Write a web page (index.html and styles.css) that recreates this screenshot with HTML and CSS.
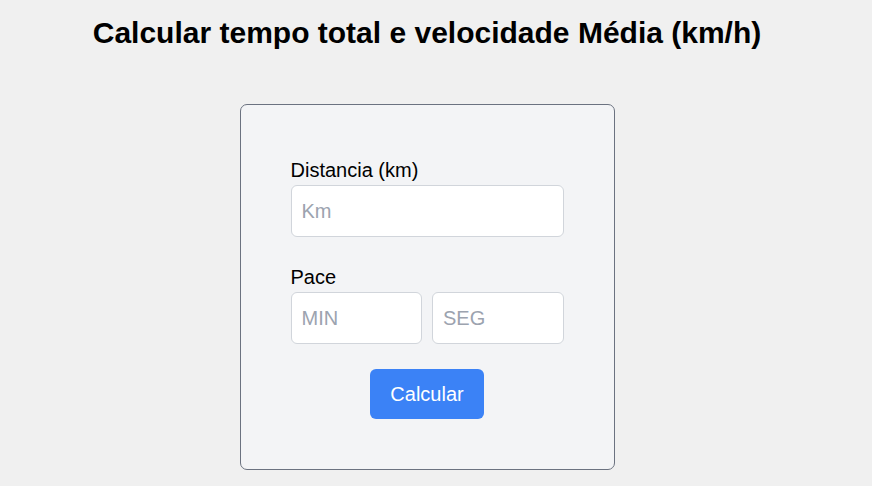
FILE: index.html
```html
<!DOCTYPE html>
<html lang="pt">
<head>
<meta charset="utf-8">
<link rel="stylesheet" href="styles.css">
<title>Calcular</title>
</head>
<body>
<main class="page">
  <h1 class="title">Calcular tempo total e velocidade Média (km/h)</h1>
  <form class="card">
    <label class="label" for="km">Distancia (km)</label>
    <input class="input" id="km" type="text" placeholder="Km">
    <label class="label label-pace" for="min">Pace</label>
    <div class="row">
      <input class="input" id="min" type="text" placeholder="MIN">
      <input class="input" id="seg" type="text" placeholder="SEG">
    </div>
    <div class="actions">
      <button class="btn" type="button">Calcular</button>
    </div>
  </form>
</main>
</body>
</html>
```
FILE: styles.css
```css
html, body {
  margin: 0;
  padding: 0;
  background: #f0f0f0;
  font-family: "Liberation Sans", Arial, sans-serif;
  color: #000;
}
.page {
  width: 854px;
  display: flex;
  flex-direction: column;
  align-items: center;
}
.title {
  font-size: 30px;
  font-weight: 700;
  line-height: 34px;
  margin: 16px 0 0 0;
}
.card {
  margin-top: 54px;
  width: 273px;
  padding: 53px 50px 50px;
  background: #f3f4f6;
  border: 1px solid #6b7280;
  border-radius: 7px;
  display: flex;
  flex-direction: column;
}
.label {
  font-size: 20px;
  line-height: 24px;
  margin-bottom: 3px;
}
.label-pace {
  margin-top: 28px;
}
.input {
  box-sizing: border-box;
  height: 52px;
  width: 100%;
  border: 1px solid #d1d5db;
  border-radius: 6px;
  background: #fff;
  padding: 0 10px;
  font-family: "Liberation Sans", Arial, sans-serif;
  font-size: 20px;
  color: #111;
  outline: none;
}
.input::placeholder {
  color: #9ca3af;
}
.row {
  display: flex;
  gap: 10px;
}
.row .input {
  flex: 1;
  min-width: 0;
}
.actions {
  display: flex;
  justify-content: center;
  margin-top: 25px;
}
.btn {
  width: 114px;
  height: 50px;
  border: none;
  border-radius: 6px;
  background: #3b82f6;
  color: #fff;
  font-family: "Liberation Sans", Arial, sans-serif;
  font-size: 20px;
  cursor: pointer;
}
```
